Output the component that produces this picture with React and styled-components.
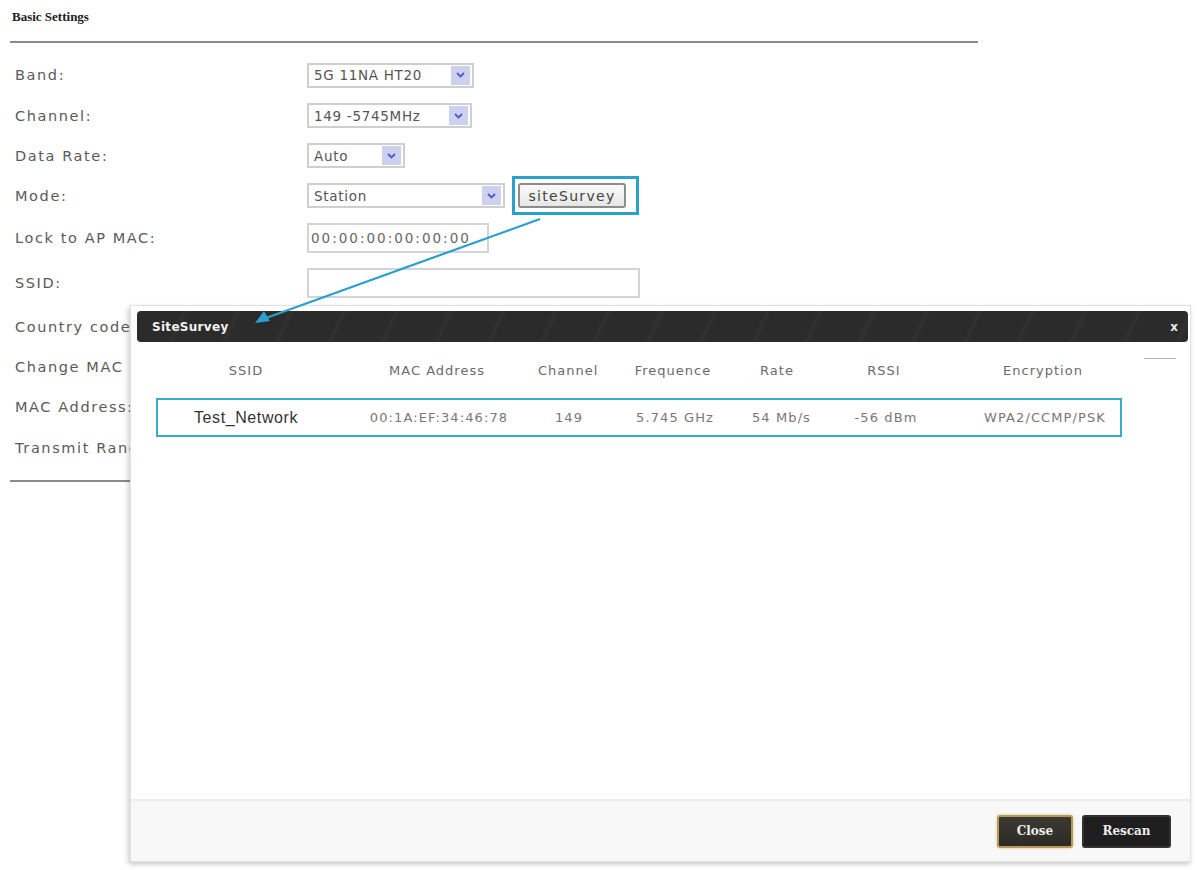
import React from 'react'
import styled, { createGlobalStyle } from 'styled-components'

const GlobalStyle = createGlobalStyle`
  html, body {
    margin: 0;
    padding: 0;
    background: #ffffff;
  }
  body {
    font-family: "DejaVu Sans", Verdana, sans-serif;
  }
`

const Page = styled.div`
  position: relative;
  width: 1198px;
  height: 870px;
  overflow: hidden;
  padding: 0 0 0 10px;
  box-sizing: border-box;
`

const Title = styled.div`
  font-family: "Liberation Serif", "Times New Roman", serif;
  font-weight: bold;
  font-size: 13px;
  color: #222;
  height: 41px;
  box-sizing: border-box;
  padding: 9px 0 0 2px;
`

const Rule = styled.div`
  width: 968px;
  height: 2px;
  background: #8a8a8a;
  margin-top: ${p => p.$top || 0}px;
`

const Form = styled.div`
  display: flex;
  flex-direction: column;
  padding-top: 12px;
`

const Row = styled.div`
  display: flex;
  align-items: center;
  height: ${p => p.$h}px;
`

const Label = styled.div`
  width: 297px;
  padding-left: 5px;
  box-sizing: border-box;
  font-size: 14.5px;
  letter-spacing: 1.6px;
  color: #5a5a5a;
  white-space: nowrap;
`

const SelectBox = styled.div`
  display: flex;
  align-items: center;
  justify-content: space-between;
  width: ${p => p.$w}px;
  height: 25px;
  box-sizing: border-box;
  border: 2px solid #cfcfcf;
  background: #fff;
  padding: 0 2px 0 5px;
  font-size: 13.5px;
  letter-spacing: 0.7px;
  color: #555;
  white-space: nowrap;
`

const Arrow = styled.div`
  display: flex;
  align-items: center;
  justify-content: center;
  width: 19px;
  height: 19px;
  background: #cdd0ee;
  flex-shrink: 0;
`

const TextBox = styled.div`
  display: flex;
  align-items: center;
  width: ${p => p.$w}px;
  height: 30px;
  box-sizing: border-box;
  border: 2px solid #d4d4d4;
  padding-left: 2px;
  font-size: 13.5px;
  color: #666;
  letter-spacing: 2px;
  white-space: nowrap;
  overflow: hidden;
`

const Highlight = styled.div`
  margin-left: 7px;
  padding: 4px 10px 4px 3px;
  border: 3px solid #2aa3cc;
  display: flex;
  align-items: center;
`

const SurveyButton = styled.div`
  width: 108px;
  height: 25px;
  box-sizing: border-box;
  border: 2px solid #8c8c8c;
  border-radius: 3px;
  background: linear-gradient(#fafafa, #e6e6e6);
  display: flex;
  align-items: center;
  justify-content: center;
  font-size: 14px;
  letter-spacing: 1.3px;
  color: #444;
`

const Modal = styled.div`
  position: absolute;
  left: 130px;
  top: 305px;
  width: 1061px;
  height: 557px;
  box-sizing: border-box;
  background: #fff;
  border: 1px solid #e2e2e2;
  box-shadow: -3px 2px 5px rgba(0, 0, 0, 0.12), 0 3px 4px rgba(0, 0, 0, 0.1);
  padding: 5px 2px 0 6px;
  display: flex;
  flex-direction: column;
`

const Header = styled.div`
  height: 31px;
  border-radius: 4px;
  background: repeating-linear-gradient(115deg, #2b2b2b 0px, #2b2b2b 40px, #313131 44px, #2b2b2b 48px);
  display: flex;
  align-items: center;
  justify-content: space-between;
  padding: 0 10px 0 15px;
  color: #fff;
`

const HeaderTitle = styled.div`
  font-family: "DejaVu Sans", sans-serif;
  font-weight: bold;
  font-size: 12px;
  letter-spacing: 0.3px;
  color: #f2f2f2;
`

const CloseX = styled.div`
  font-family: "DejaVu Sans", sans-serif;
  font-weight: bold;
  font-size: 12px;
  color: #e8e8e8;
`

const Body = styled.div`
  position: relative;
  flex: 1;
  padding: 0 0 0 19px;
`

const ScrollMark = styled.div`
  position: absolute;
  right: 12px;
  top: 16px;
  width: 32px;
  height: 1px;
  background: #b0b0b0;
`

const Grid = styled.div`
  display: grid;
  grid-template-columns: 180px 202px 58px 154px 54px 160px 158px;
  width: 966px;
  box-sizing: border-box;
  align-items: center;
  height: ${p => p.$h}px;
  ${p => p.$selected && `
    border: 2px solid #3aaad2;
  `}
`

const HeadCell = styled.div`
  text-align: center;
  font-size: 13px;
  letter-spacing: 1px;
  color: #6a6a6a;
  white-space: nowrap;
`

const Cell = styled.div`
  text-align: center;
  font-size: 13px;
  color: #777;
  white-space: nowrap;
  letter-spacing: 1.1px;
  ${p => p.$name && `
    font-family: "Liberation Sans", Arial, sans-serif;
    font-size: 16px;
    color: #333;
    letter-spacing: 0.6px;
    padding-right: 4px;
  `}
`

const Footer = styled.div`
  height: 60px;
  margin-left: -6px;
  margin-right: -2px;
  border-top: 2px solid #ececec;
  background: #f8f8f8;
  display: flex;
  align-items: center;
  justify-content: flex-end;
  gap: 9px;
  padding-right: 19px;
`

const FootButton = styled.div`
  height: 33px;
  width: ${p => p.$w}px;
  box-sizing: border-box;
  border-radius: 3px;
  display: flex;
  align-items: center;
  justify-content: center;
  font-family: "DejaVu Serif", "Liberation Serif", serif;
  font-weight: bold;
  font-size: 12px;
  color: #ececec;
  background: ${p => (p.$primary ? 'linear-gradient(#3b3a32, #2c2a25)' : '#1e1e1e')};
  border: 2px solid ${p => (p.$primary ? '#b79a5a' : '#333')};
  box-shadow: ${p => (p.$primary ? '0 0 3px rgba(200,160,70,0.6)' : 'none')};
`

const Overlay = styled.svg`
  position: absolute;
  left: 0;
  top: 0;
  pointer-events: none;
`

const Chevron = () => (
  <svg width="9" height="6" viewBox="0 0 9 6">
    <path d="M1 1 L4.5 4.5 L8 1" fill="none" stroke="#4a5ad0" strokeWidth="1.8" />
  </svg>
)

const Select = ({ w, children }) => (
  <SelectBox $w={w}>
    <span>{children}</span>
    <Arrow><Chevron /></Arrow>
  </SelectBox>
)

const columns = ['SSID', 'MAC Address', 'Channel', 'Frequence', 'Rate', 'RSSI', 'Encryption']
const network = ['00:1A:EF:34:46:78', '149', '5.745 GHz', '54 Mb/s', '-56 dBm', 'WPA2/CCMP/PSK']

export default function App() {
  return (
    <>
      <GlobalStyle />
      <Page>
        <Title>Basic Settings</Title>
        <Rule />
        <Form>
          <Row $h={40}>
            <Label>Band:</Label>
            <Select w={167}>5G 11NA HT20</Select>
          </Row>
          <Row $h={41}>
            <Label>Channel:</Label>
            <Select w={165}>149 -5745MHz</Select>
          </Row>
          <Row $h={39}>
            <Label>Data Rate:</Label>
            <Select w={98}>Auto</Select>
          </Row>
          <Row $h={41}>
            <Label>Mode:</Label>
            <Select w={198}>Station</Select>
            <Highlight>
              <SurveyButton>siteSurvey</SurveyButton>
            </Highlight>
          </Row>
          <Row $h={44}>
            <Label>Lock to AP MAC:</Label>
            <TextBox $w={182}>00:00:00:00:00:00</TextBox>
          </Row>
          <Row $h={46}>
            <Label>SSID:</Label>
            <TextBox $w={333} />
          </Row>
          <Row $h={42}>
            <Label>Country code:</Label>
          </Row>
          <Row $h={38}>
            <Label>Change MAC address:</Label>
          </Row>
          <Row $h={42}>
            <Label>MAC Address:</Label>
          </Row>
          <Row $h={40}>
            <Label>Transmit Range:</Label>
          </Row>
        </Form>
        <Rule $top={12} />

        <Modal>
          <Header>
            <HeaderTitle>SiteSurvey</HeaderTitle>
            <CloseX>x</CloseX>
          </Header>
          <Body>
            <ScrollMark />
            <Grid $h={56}>
              {columns.map(c => <HeadCell key={c}>{c}</HeadCell>)}
            </Grid>
            <Grid $h={39} $selected>
              <Cell $name>Test_Network</Cell>
              {network.map((v, i) => <Cell key={i}>{v}</Cell>)}
            </Grid>
          </Body>
          <Footer>
            <FootButton $w={76} $primary>Close</FootButton>
            <FootButton $w={89}>Rescan</FootButton>
          </Footer>
        </Modal>

        <Overlay width="1198" height="870" viewBox="0 0 1198 870">
          <line x1="540" y1="219" x2="266" y2="318" stroke="#2a9fd0" strokeWidth="2.2" />
          <path d="M255 323 L264 311 L270 321 Z" fill="#2a9fd0" />
        </Overlay>
      </Page>
    </>
  )
}
